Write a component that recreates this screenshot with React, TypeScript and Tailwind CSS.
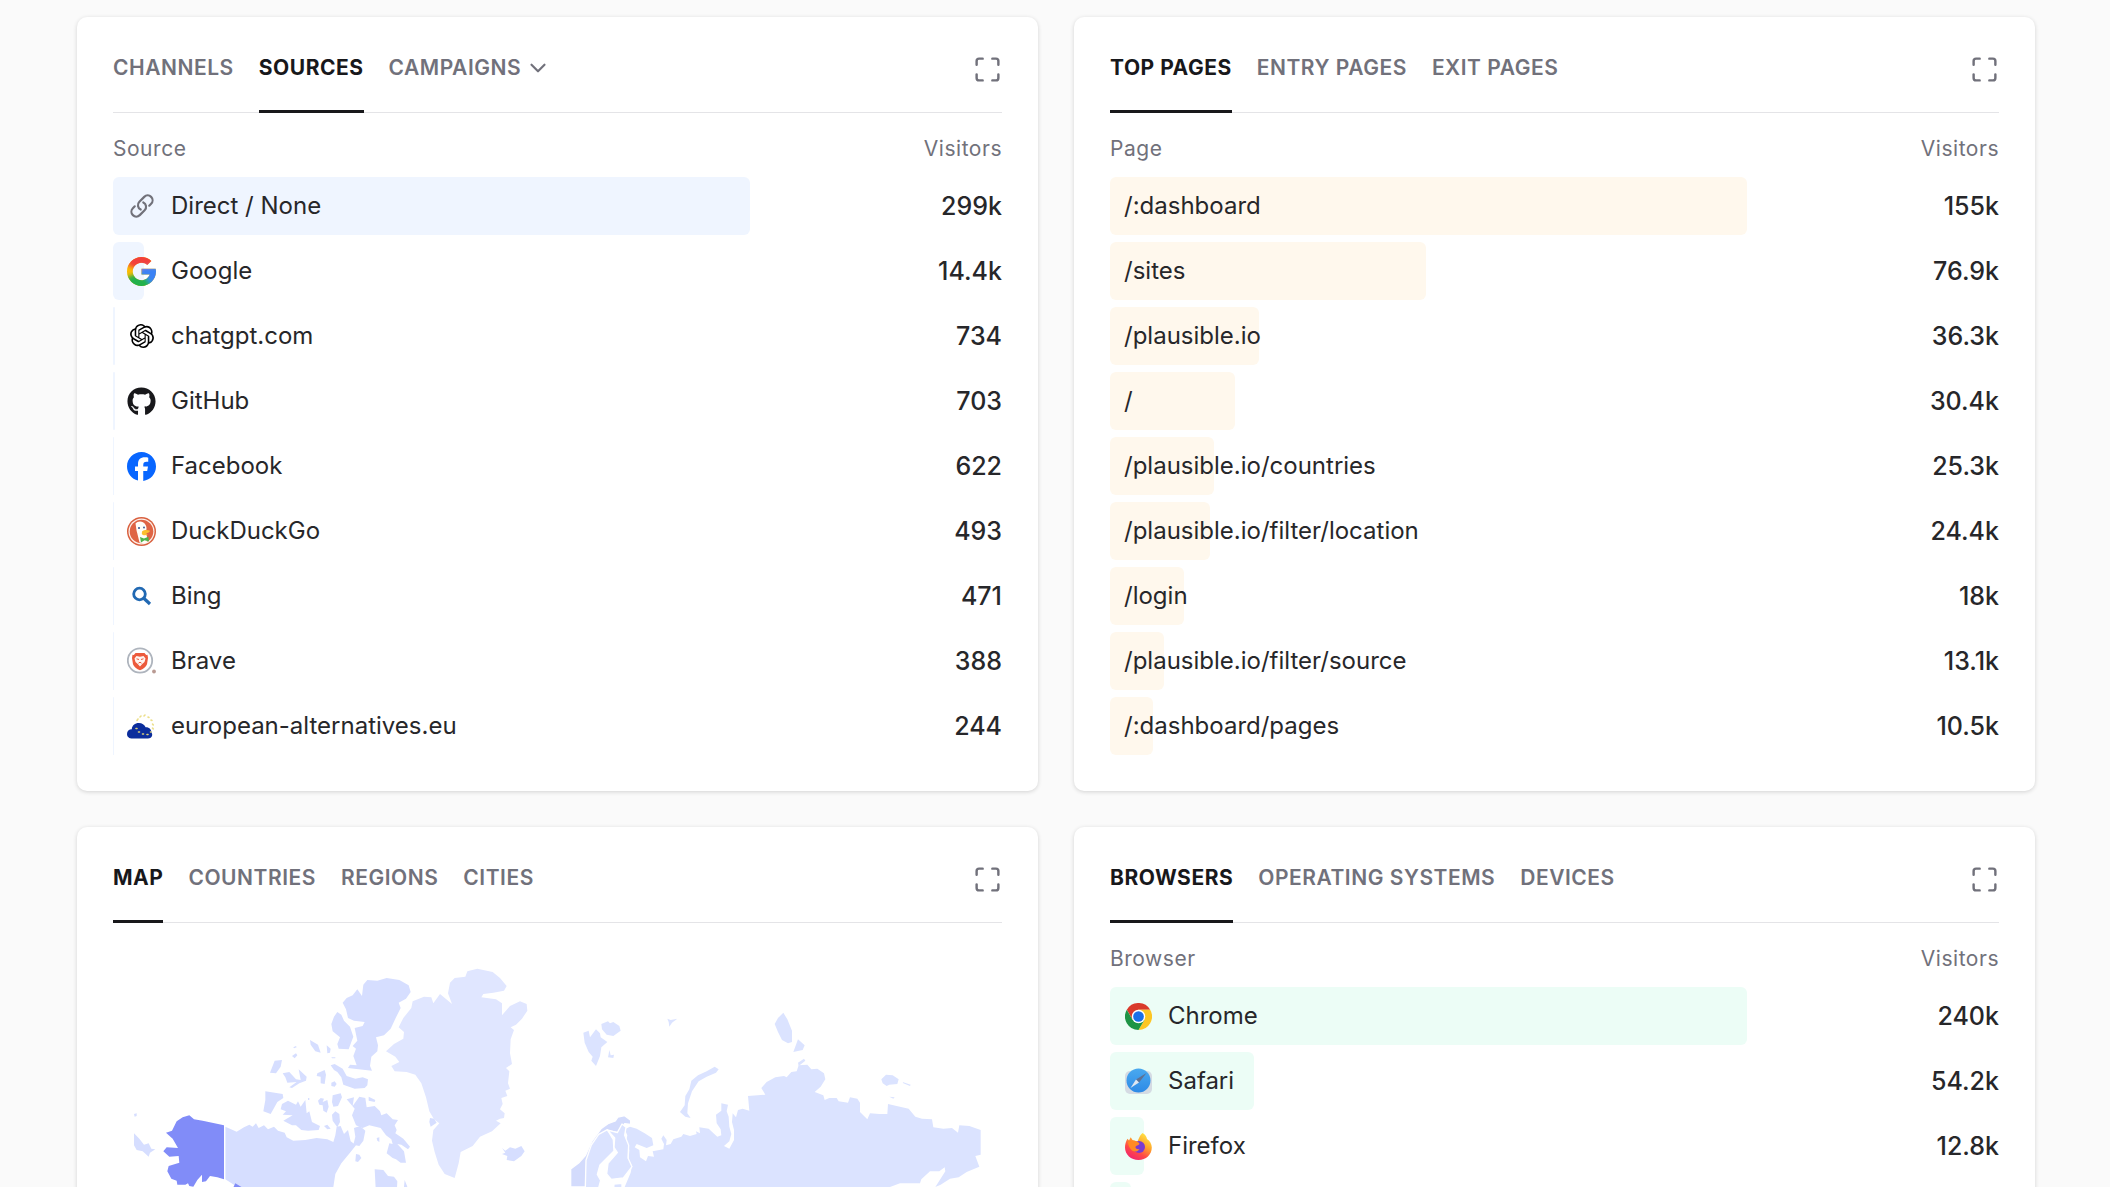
import React, { useState } from 'react';
import { SiOpenai } from 'react-icons/si';
import { FaGithub, FaFacebook } from 'react-icons/fa6';
import { HiOutlineLink } from 'react-icons/hi2';
import { ChevronDown, Maximize } from 'lucide-react';
import { clsx } from 'clsx';

interface Entry {
  name: string;
  value: string;
  // share of the widest bar, in percent
  share: number;
  icon?: React.ReactNode;
}

function GoogleIcon() {
  return (
    <svg viewBox="4 4 40 40" className="size-[29px]">
      <defs>
        <clipPath id="google-g">
          <path d="M43.611 20.083H24v8h11.303c-1.649 4.657-6.08 8-11.303 8-6.627 0-12-5.373-12-12s5.373-12 12-12c3.059 0 5.842 1.154 7.961 3.039l5.657-5.657C34.046 6.053 29.268 4 24 4 12.955 4 4 12.955 4 24s8.955 20 20 20 20-8.955 20-20c0-1.341-.138-2.65-.389-3.917z" />
        </clipPath>
        <filter id="google-blur" x="-30%" y="-30%" width="160%" height="160%">
          <feGaussianBlur stdDeviation="2.6" />
        </filter>
      </defs>
      <g clipPath="url(#google-g)">
        <rect x="0" y="0" width="48" height="48" fill="#fbbc05" />
        <g filter="url(#google-blur)">
          <path d="M24 24 3 14 10-4H52L40 14z" fill="#f2403a" />
          <path d="M24 24 2 33 8 54H34L38 38z" fill="#22b14c" />
          <path d="M22 17H54V48H38L33 34 22 30z" fill="#3b82f6" />
        </g>
      </g>
    </svg>
  );
}

function DuckIcon() {
  return (
    <svg viewBox="0 0 29 29" className="size-[29px]">
      <circle cx="14.5" cy="14.5" r="14.5" fill="#d9603f" />
      <circle cx="14.5" cy="14.5" r="13" fill="#fdf3ee" />
      <circle cx="14.5" cy="14.5" r="11.8" fill="#df6444" />
      <path d="M8.5 6.5c1.500-1.800 5-2.700 7.500-1.200 2.600 1.500 3.700 4 3.500 6.500l-.7 4 1.700 5.700-.8 4.300c-2.600.8-5 .7-7.200-.2L10.200 16c-1-2.800-1-6-1.700-9.500z" fill="#fffdf8" />
      <circle cx="12" cy="11" r="1" fill="#2d4f8e" />
      <circle cx="17" cy="10.500" r=".9" fill="#2d4f8e" />
      <path d="M15 14.500c2-1.600 5-1.800 8-.8-.3 1.400-2 2.300-4.200 2.500l2 1c-1.800 1.600-5 1.400-6-.2z" fill="#fbbf2d" />
      <path d="m13 20 4 1.500 4.300-1.800.7 4.800-4.500-1.200-3.500 2.200z" fill="#4fb24a" />
    </svg>
  );
}

function BingIcon() {
  return (
    <svg viewBox="0 0 29 29" fill="none" stroke="#2169b3" className="size-[29px]">
      <circle cx="12.500" cy="12" r="5.800" strokeWidth="2.800" />
      <path d="m16.500 16 6.500 6" strokeWidth="3.200" />
    </svg>
  );
}

function BraveIcon() {
  return (
    <svg viewBox="0 0 29 29" className="size-[29px]">
      <circle cx="13" cy="13.500" r="12.200" fill="#fff" stroke="#aeb4bd" strokeWidth="1.800" />
      <path d="M8.500 6h9l1.700 2 1.300-.2.500 3.200-1 6.200c-.8 2.600-3.800 4.700-7 6-3.200-1.300-6.200-3.400-7-6L5 11l.5-3.200 1.300.2z" fill="#ec5a3c" />
      <path d="m9.500 9 3.500.8 3.500-.8 2 2.600-1 3.300-2 1.800-2.500 2.800-2.500-2.800-2-1.800-1-3.300z" fill="#fff4f0" />
      <path d="m9.500 11.800 2.500.7M16.500 11.800l-2.500.7M11.500 16.200l1.500-1 1.500 1" stroke="#ec5a3c" strokeWidth="1" fill="none" />
      <circle cx="27" cy="24.500" r="1.900" fill="#b99a93" />
    </svg>
  );
}

function EuCloudIcon() {
  return (
    <svg viewBox="0 0 29 29" className="size-[29px]">
      <path d="M5.500 26.500c-3.300 0-5.500-1.800-5.500-4.600 0-2.700 2-4.700 4.800-4.700C5 13.500 8 11 11.800 11c3.300 0 5.700 1.600 6.800 4.300 3.300-.3 5.800 2 5.800 5 2 3.200.2 6.200-3.400 6.200z" fill="#0b2d9c" />
      <path d="M10 8.500 11 7M13 5l1-1M17 4l1-1M21 5l1 .5M24 8l1 .5M25.500 12l.8 1M25.500 16l.8 1" stroke="#ecdf8a" strokeWidth="1.600" strokeLinecap="round" />
      <path d="M9 16.500h1M11.500 20h1M15.500 22h1M20 22.500h1M23.500 20h.5" stroke="#d9cf7a" strokeWidth="1.600" strokeLinecap="round" />
    </svg>
  );
}

function ChromeIcon() {
  return (
    <svg viewBox="0 0 48 48" className="size-[27px]">
      <circle cx="24" cy="24" r="24" fill="#fff" />
      <path d="M24 12h20.800A24 24 0 0 0 3.200 12l10.400 18z" fill="#d93a2b" />
      <path d="M34.400 30 24 48A24 24 0 0 0 44.800 12H24z" fill="#fcc624" />
      <path d="M13.600 30 3.200 12A24 24 0 0 0 24 48l10.400-18z" fill="#1e9445" />
      <circle cx="24" cy="24" r="12" fill="#fff" />
      <circle cx="24" cy="24" r="9.500" fill="#1a6fe8" />
    </svg>
  );
}

function SafariIcon() {
  return (
    <svg viewBox="0 0 27 27" className="size-[27px]">
      <defs>
        <linearGradient id="safari-dial" x1="0" y1="0" x2="0" y2="1">
          <stop offset="0" stopColor="#4aa9ef" />
          <stop offset="1" stopColor="#2d8ae6" />
        </linearGradient>
      </defs>
      <rect x="0" y="3" width="27" height="23" rx="5" fill="#d5dbe3" />
      <circle cx="13.500" cy="12.500" r="12" fill="url(#safari-dial)" />
      <path d="m21.500 5-10.500 6.500 3 3z" fill="#5f7192" />
      <path d="m5.500 20 5.500-8.500 3 3z" fill="#dfe7f1" />
    </svg>
  );
}

function FirefoxIcon() {
  return (
    <svg viewBox="0 0 27 27" className="size-[27px]">
      <defs>
        <linearGradient id="fox-body" x1=".85" y1="0" x2=".25" y2="1">
          <stop offset="0" stopColor="#fff04a" />
          <stop offset=".4" stopColor="#ffa32b" />
          <stop offset=".7" stopColor="#ff4848" />
          <stop offset="1" stopColor="#ef2272" />
        </linearGradient>
      </defs>
      <path d="M17.500 0c3 1.800 4 3.700 4.500 6 2.700 1.700 4.800 5 4.800 8.500C26.800 21.500 21 27 13.500 27S0 21.500 0 14.500c0-3 .8-6 2.500-8.700L4 7.500l1.700-3.200L7.500 7l5 1.500c1.500-3 1.800-5.700 5-8.500z" fill="url(#fox-body)" />
      <circle cx="14" cy="14" r="6" fill="#7a3bd0" />
      <path d="M3 9c3-1.500 7.500-1.700 10 .2 1.500.5 2 1.700.5 2.700-2 .8-3.300 1.300-3 2.600.5 1.500 2 2 4 1.500-1 2.500-5 3.500-7.500 1.500C4.800 15.500 3 12 3 9z" fill="#ff8a24" />
    </svg>
  );
}

const sources: Entry[] = [
  { name: 'Direct / None', value: '299k', share: 100, icon: <HiOutlineLink strokeWidth={2} className="size-[26px] text-[#71717a]" /> },
  { name: 'Google', value: '14.4k', share: 4.8, icon: <GoogleIcon /> },
  { name: 'chatgpt.com', value: '734', share: 0.25, icon: <SiOpenai className="size-6 text-black" /> },
  { name: 'GitHub', value: '703', share: 0.24, icon: <FaGithub className="size-[29px] text-zinc-900" /> },
  { name: 'Facebook', value: '622', share: 0.21, icon: <FaFacebook className="size-[29px] text-[#0866ff]" /> },
  { name: 'DuckDuckGo', value: '493', share: 0.16, icon: <DuckIcon /> },
  { name: 'Bing', value: '471', share: 0.16, icon: <BingIcon /> },
  { name: 'Brave', value: '388', share: 0.13, icon: <BraveIcon /> },
  { name: 'european-alternatives.eu', value: '244', share: 0.08, icon: <EuCloudIcon /> },
];

const pages: Entry[] = [
  { name: '/:dashboard', value: '155k', share: 100 },
  { name: '/sites', value: '76.9k', share: 49.6 },
  { name: '/plausible.io', value: '36.3k', share: 23.4 },
  { name: '/', value: '30.4k', share: 19.6 },
  { name: '/plausible.io/countries', value: '25.3k', share: 16.3 },
  { name: '/plausible.io/filter/location', value: '24.4k', share: 15.7 },
  { name: '/login', value: '18k', share: 11.6 },
  { name: '/plausible.io/filter/source', value: '13.1k', share: 8.5 },
  { name: '/:dashboard/pages', value: '10.5k', share: 6.8 },
];

const browsers: Entry[] = [
  { name: 'Chrome', value: '240k', share: 100, icon: <ChromeIcon /> },
  { name: 'Safari', value: '54.2k', share: 22.6, icon: <SafariIcon /> },
  { name: 'Firefox', value: '12.8k', share: 5.3, icon: <FirefoxIcon /> },
  { name: '', value: '', share: 3.3 },
];

interface CardProps {
  tabs: string[];
  initial: string;
  menu?: string;
  children: React.ReactNode;
}

function Card({ tabs, initial, menu, children }: CardProps) {
  const [active, setActive] = useState(initial);

  return (
    <section className="bg-white rounded-[10px] shadow-[0_1px_4px_rgba(0,0,0,0.16)] px-9 pt-9 pb-[29px]">
      <div className="flex items-start justify-between border-b border-zinc-200">
        <div className="flex gap-[25px] -mb-px">
          {tabs.map((tab) => (
            <button
              key={tab}
              onClick={() => setActive(tab)}
              className={clsx(
                'h-[60px] pb-[28px] border-b-3 text-[21px] leading-7 uppercase tracking-wide whitespace-nowrap',
                tab === active
                  ? 'border-zinc-900 text-zinc-900 font-bold'
                  : 'border-transparent text-zinc-500 font-semibold'
              )}
            >
              {tab}
            </button>
          ))}
          {menu && (
            <button className="flex items-center gap-1 h-[60px] pb-[28px] border-b-3 border-transparent text-[21px] leading-7 uppercase tracking-wide font-semibold text-zinc-500">
              {menu}
              <ChevronDown size={26} strokeWidth={2} />
            </button>
          )}
        </div>
        <button aria-label="Details" className="pt-[2px] text-zinc-500">
          <Maximize size={29} />
        </button>
      </div>
      {children}
    </section>
  );
}

interface ReportProps {
  label: string;
  entries: Entry[];
  barColor: string;
}

function Report({ label, entries, barColor }: ReportProps) {
  return (
    <table className="w-full table-fixed">
      <thead>
        <tr className="h-16 text-[21px] leading-7 tracking-wide text-zinc-500">
          <th className="p-0 pt-2 text-left font-normal">{label}</th>
          <th className="w-63 p-0 pt-2 text-right font-normal">Visitors</th>
        </tr>
      </thead>
      <tbody>
        {entries.map((entry, idx) => (
          <tr key={idx} className="leading-8 text-zinc-800">
            <td className="p-0 pb-[7px] text-[24px]">
              <div className="relative flex items-center h-[58px]">
                <div
                  className={clsx('absolute inset-y-0 left-0 rounded-md', barColor)}
                  style={{ width: `${entry.share}%` }}
                />
                <a href="#" className="relative flex items-center gap-[15px] px-[14px] whitespace-nowrap">
                  {entry.icon && <span className="flex items-center justify-center size-[29px]">{entry.icon}</span>}
                  {entry.name}
                </a>
              </div>
            </td>
            <td className="p-0 pb-[7px] text-[25px] text-right font-medium">{entry.value}</td>
          </tr>
        ))}
      </tbody>
    </table>
  );
}

function WorldMap() {
  return (
    <svg viewBox="0 0 889 320" className="block w-full" role="img" aria-label="Visitors by country">
      {/* North America and Greenland */}
      <g transform="translate(7 20) scale(.33333)">
        <g fill="#d6deff">
          <path d="M316 530 350 545 372 532 388 524 398 530 408 520 416 534 432 526 444 538 462 530 474 542 494 548 500 562 520 572 556 570 590 564 622 568 640 576 646 556 650 530 662 528 672 552 684 540 692 574 708 586 690 608 664 640 646 672 640 711 640 900H420L352 711 316 688z" />
          <path d="M730 104 742 90 772 92 800 84 838 90 866 106 872 126 858 146 836 158 842 174 826 206 812 236 792 256 768 262 774 286 772 304 754 320 750 348 756 362 716 358 684 354 690 344 710 346 700 318 708 296 698 288 712 272 704 234 728 228 734 216 702 212 684 204 678 178 668 158 680 144 698 136 712 118 726 138z" />
          <path d="M652 186 664 194 672 212 690 230 700 260 694 276 686 298 656 296 652 282 660 262 638 244 634 222 642 200z" />
          <path d="m570 270 24 14 8 24-16-4-14-20zM520 292l8-4 2 4-8 3zM516 318l12-8 4 6-8 9zM620 286l12 10-2 12-8 2zM634 322l12 0 0 3-10 0zM486 330l-22 2-14 36 18 2 14-20zM488 370l20-4 20 22 14 2-6-32 24 22-2 12-20 8-22 14-8-2 22-16-28 2-6-16zM592 370l22-10 4 14-4 28-12-2v-20l-12-2zM632 346l12-4 24 14 12 22 26 8 22-4 16 6-2 18-8 8-30 2-34-12-6-22-12-16-10-6zM634 398l10-4 6 8-6 8-10-2z" />
          <path d="m436 424 52 8 2 12-18 12-12 22-8 14-22-8 6-34zM486 462l18-10 24 12 6-10 8 16 14-20 4 40 8-6 8 32 24 12-4 12-32 2-20-2-16-14-12 0-26-14 28-16-30-2 10-10-16-6zM594 452l8-8 10 2-4 10 14-6 4 20-6 18-10-6-2-16-10-2zM638 436l24-6 4 12-12 26-14 2-4-14zM636 494l10-10 12 8 2 24-8 16-14-20zM612 528l10-4 10 12-10 2zM564 444l4 0v6l-4 0z" />
          <path d="m680 448 22-6-4 26 20-28 18 4 4 28 24-4 16 16 4 12 16-6 18 18 16 2-10 16 6 14-4 10 24 16 20 24-6 8-20-14-12-2 20 22 6 34-16 0-14-10-10-4-18-14 8-30 10 2-4-14-16-12-16-22-34-8-20 8-20-8-12-30 8-20zM746 440l20 10-2 6-18-4z" />
          <path d="m702 534 18-6 16 14-6 30-12 16-18-4 6-24zM708 612l10 2 6 10-10 12-8-2zM770 564l8-2 0 14-6-4zM764 658l26 2 14 18 18 2 10 14-2 40H768zM854 690l8 20-12 20z" />
          <path d="m42 550 16 16 14 18 14-4 8 16 12 2-16 10-4 12-18-16-18-4-8-14zM42 492l8-2 0 8-6 2zM1146 594l10 8 14-10 16 4 18-8 10 16-10 14-22 16-22-4 2-12-16-6 10-4z" />
        </g>
        <path
          fill="#e0e6ff"
          d="M984 130 990 98 1004 84 1036 80 1042 64 1072 56 1118 66 1140 84 1160 108 1152 122 1120 128 1090 132 1084 142 1128 148 1146 160 1146 196 1170 168 1200 154 1220 162 1222 182 1206 206 1188 224 1172 232 1182 240 1172 268 1170 310 1176 342 1158 354 1168 364 1164 400 1170 416 1156 422 1162 438 1144 444 1148 462 1140 478 1154 490 1152 504 1140 506 1128 512 1142 520 1116 544 1080 560 1058 588 1022 606 1016 640 1004 684 974 672 956 644 944 606 936 572 940 540 958 520 942 508 928 484 918 442 904 400 886 374 860 366 824 364 814 348 838 336 826 320 798 304 822 282 850 266 852 246 836 232 850 204 874 174 878 154 912 140 934 142 940 160 960 132 996 162z"
        />
        <path fill="#d6deff" d="m930 504 12 2 8 12-18 12-4-14z" />
        <path
          fill="#818cf8"
          d="M208 496 222 508 248 512 312 526V688L292 682 270 678 258 694 246 696 246 674 232 690 220 710 208 708 204 700 196 704 172 704 170 692 154 686 142 664 146 648 178 638 176 618 148 620 130 604 140 592 174 594 158 566 138 548 156 542 170 514 188 502zM346 700l20 12H340z"
        />
        <path d="M314 526V690" stroke="#fff" strokeWidth="3" />
      </g>
      {/* Scandinavia and Russia */}
      <g transform="translate(407 20) scale(.33333)" fill="#dbe3ff">
        <path d="M190 248 206 242 210 262 228 238 240 250 242 262 262 276 244 292 240 318 228 348 214 332 218 320 206 306 194 278zM244 222l20-8 6 6 10-4 18 12 4 14-22 16-20-4-14-16zM268 300l4 16 10-2-2 10-16-2 2-10zM442 206l10 4 20-4-16 12-8 12-2-14z" />
        <path d="m480 486 14-20 2-28 12-20 6-26 20-16 26-12 24-14 12 8-8 10-28 12-24 14-20 30-12 36-2 30 10 14-16-4zM764 222l10-18 16-16 12 20 14 34 0 34-12 4-18-10-12-24zM820 306l14-38 20 18-6 14zM834 338l18-12 4 6-20 16zM1084 388l14-14 20 2 18 12-4 14-24 2-8 4-12-8zM1148 396l24 8-2 4-20-8zM1108 440l16 2-4 4z" />
        <path d="M330 530 350 536 374 550 396 564 400 586 380 594 350 582 344 592 358 600 360 622 378 634 384 618 402 620 398 604 430 598 432 582 424 566 430 556 440 570 438 586 452 582 460 568 484 560 490 552 510 558 530 552 528 544 540 550 538 532 566 536 592 560 604 556 602 538 590 520 588 494 604 482 604 460 624 464 620 484 626 500 628 530 634 552 628 574 612 588 628 596 642 570 642 540 636 516 638 490 648 502 654 480 668 476 688 482 684 438 736 434 724 414 740 396 766 382 792 378 800 382 814 366 830 364 836 346 862 344 874 358 892 356 912 370 916 388 902 410 884 426 910 436 914 450 928 444 950 444 956 454 984 458 990 442 1012 446 1020 458 1020 486 1042 508 1050 490 1078 492 1102 492 1104 462 1130 468 1166 476 1186 500 1206 506 1236 508 1240 532 1270 536 1296 534 1314 548 1318 526 1348 528 1382 540V614L1366 618 1378 650 1340 666 1316 682 1290 686 1262 704 1246 711 1276 664 1274 652 1258 664 1230 664 1204 688 1200 700 1140 700 1110 711 1000 900H300L314 711 332 668 336 648 326 628 328 600 318 576 322 556 314 538z" />
        <g stroke="#fff" strokeWidth="4" strokeLinejoin="round">
          <path d="m152 711 0-54 24-18 20-22 20-44 28-38 20-14 22-8 8-12 20-4 18 14 0 12-18-2-14 28-32-6-20 8-20 16-16 40-8 46 0 58z" fill="#d3dbfc" />
          <path d="m196 711 2-80 16-46 22-32 26-14 18 30 2 34-24 24-18 18-8 28 10 18-8 30-4 30h-34z" />
          <path d="m262 540 30 8 14-26 12 10-4 24 12 30-2 38 12 26-26 34-36 4-14-16 4-32 28-32-10-16 2-28z" />
          <path d="m282 702 24-2v30h-26z" />
        </g>
      </g>
    </svg>
  );
}

export default function App() {
  return (
    <main className="h-screen overflow-hidden bg-[#fafafa] pl-[77px] pr-[75px] pt-[17px] font-['Inter','Liberation_Sans',sans-serif]">
      <div className="grid grid-cols-2 gap-9">
        <Card tabs={['Channels', 'Sources']} initial="Sources" menu="Campaigns">
          <Report label="Source" entries={sources} barColor="bg-[#eff5ff]" />
        </Card>
        <Card tabs={['Top Pages', 'Entry Pages', 'Exit Pages']} initial="Top Pages">
          <Report label="Page" entries={pages} barColor="bg-[#fff8ed]" />
        </Card>
        <Card tabs={['Map', 'Countries', 'Regions', 'Cities']} initial="Map">
          <div className="pt-[7px]">
            <WorldMap />
          </div>
        </Card>
        <Card tabs={['Browsers', 'Operating Systems', 'Devices']} initial="Browsers">
          <Report label="Browser" entries={browsers} barColor="bg-[#ecfdf6]" />
        </Card>
      </div>
    </main>
  );
}
